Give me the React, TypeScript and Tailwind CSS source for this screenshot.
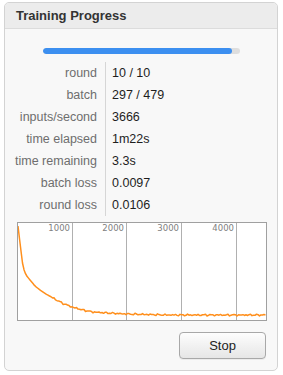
import React from "react";

const knots: [number, number][] = [
  [0, 3], [2, 20], [5, 44], [8, 52], [12, 57], [17, 63], [22, 67], [28, 71],
  [35, 75], [44, 80], [54, 84], [65, 87], [75, 89], [90, 90], [109, 91],
  [150, 92], [248, 92],
];

function interp(x: number) {
  for (let i = 0; i < knots.length - 1; i++) {
    const [x0, y0] = knots[i];
    const [x1, y1] = knots[i + 1];
    if (x >= x0 && x <= x1) return y0 + ((y1 - y0) * (x - x0)) / (x1 - x0);
  }
  return 92;
}

function buildPath() {
  const pts: string[] = [];
  for (let x = 0; x <= 248; x += 1.5) {
    let y = interp(x);
    if (x > 30) {
      const n =
        Math.sin(x * 1.7) * 0.45 + Math.sin(x * 0.83 + 1.3) * 0.4 + Math.sin(x * 3.1 + 0.5) * 0.3;
      y += n;
    }
    pts.push(`${x.toFixed(1)},${y.toFixed(2)}`);
  }
  return "M" + pts.join(" L");
}

const rows: [string, string][] = [
  ["round", "10 / 10"],
  ["batch", "297 / 479"],
  ["inputs/second", "3666"],
  ["time elapsed", "1m22s"],
  ["time remaining", "3.3s"],
  ["batch loss", "0.0097"],
  ["round loss", "0.0106"],
];

const grid = [54, 108, 163, 218];
const labels = ["1000", "2000", "3000", "4000"];

export default function App() {
  const d = buildPath();
  return (
    <div
      className="w-[283px] h-[375px] bg-white pt-[2px] pl-[4px]"
      style={{ fontFamily: '"Liberation Sans", Arial, sans-serif' }}
    >
      <div className="w-[274px] h-[369px] border border-[#d3d3d3] rounded-[5px] bg-[#f8f8f8] overflow-hidden flex flex-col">
        <div className="h-[26px] bg-[#ececec] border-b border-[#dcdcdc] flex items-center pl-[11px] text-[13px] font-bold text-[#333]">
          Training Progress
        </div>
        <div className="flex justify-center mt-[19px]">
          <div className="w-[197px] h-[6px] rounded-full bg-[#dedede] overflow-hidden">
            <div className="h-full w-[96.4%] bg-[#3c8ff0] rounded-full" />
          </div>
        </div>
        <div className="mt-[8px] flex flex-col">
          {rows.map(([k, v]) => (
            <div key={k} className="flex h-[22px] items-center text-[12.5px]">
              <div className="w-[100px] pr-[8px] text-right text-[#6e6e6e]">{k}</div>
              <div className="h-full border-l border-[#d6d6d6] pl-[6px] flex items-center text-[#1e1e1e]">{v}</div>
            </div>
          ))}
        </div>
        <div className="ml-[12px] mt-[6px] w-[250px] h-[99px] border border-[#a0a0a0] bg-white">
          <svg width="248" height="97" viewBox="0 0 248 97">
            {grid.map((g, i) => (
              <g key={g}>
                <line x1={g + 0.5} y1={0} x2={g + 0.5} y2={97} stroke="#b0b0b0" strokeWidth={1} />
                <text
                  x={g - 2}
                  y={8}
                  textAnchor="end"
                  fontSize="8.5"
                  fill="#808080"
                  fontFamily='"DejaVu Sans", "Liberation Sans", sans-serif'
                >
                  {labels[i]}
                </text>
              </g>
            ))}
            <path d={d} fill="none" stroke="#ff8f1c" strokeWidth={1.5} strokeLinejoin="round" />
          </svg>
        </div>
        <div className="flex justify-end mt-[11px] pr-[11px]">
          <button className="w-[87px] h-[27px] rounded-[4px] border border-[#a8a8a8] bg-gradient-to-b from-[#fdfdfd] to-[#e6e6e6] text-[13px] text-[#222] shadow-[0_1px_0_rgba(0,0,0,0.05)]">
            Stop
          </button>
        </div>
      </div>
    </div>
  );
}
